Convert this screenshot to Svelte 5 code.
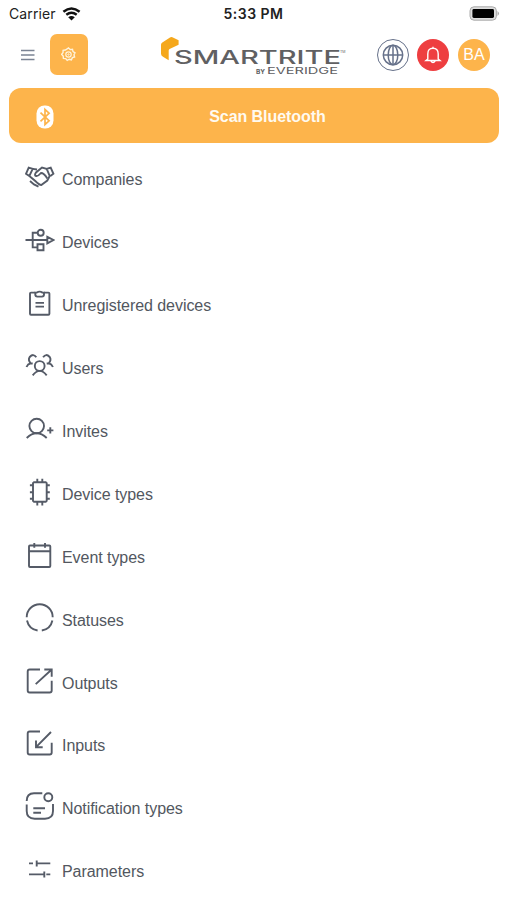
<script>
    const items = [
        { name: "Companies", paths: ["M4.3 14 1 11.8 3.7 5.7l4 1.2-3.4 7.1 6 5q4 4 6 4l6-4.5 2.4-4.5-3-7.1 4-1.2 2.7 6.1-3 2.2", "M7.7 6.9 12 7.5M21.7 6.9 17 5.5 11 10.5q-2 3 0 3.5t5-3q3 0 6.3 5.5M5 19l4 3.4 4.5 2.2"] },
        { name: "Devices", paths: ["M.5 15h21.8M22.3 11.8v6.6l6.2-3.4zM12.7 7.8h-5v14.6h4.8M12.5 19.3h6v6h-6z", "M18.7 7.8a3 3 0 1 1-6 0a3 3 0 1 1 6 0"] },
        { name: "Unregistered devices", paths: ["M10.3 4.6H6q-1 0-1 1v20.2q0 1 1 1h17.4q1 0 1-1V5.6q0-1-1-1H19", "M10.3 4.6h1.5q2.8-2 5.7 0H19v2q0 2-2 2h-4.7q-2 0-2-2zM10.5 14.9H19M10.5 18.6H19"] },
        { name: "Users", paths: ["M19.6 15a4.9 4.9 0 1 1-9.8 0a4.9 4.9 0 1 1 9.8 0", "M7.7 24.3q7-8.8 14 0M1.5 16q1.2-3 4.2-3.7-3-3.3-1-6.3 3.7-4 6.6.3M27.9 16q-1.2-3-4.2-3.7 3-3.3 1-6.3-3.7-4-6.6.3M5.7 12.3l2 .2M23.7 12.3l-2 .2"] },
        { name: "Invites", paths: ["M19 12a7.3 7.3 0 1 1-14.6 0a7.3 7.3 0 1 1 14.6 0", "M1.7 24q10-9.4 20 0M22.2 16.4h6.2M25.3 13.3v6.2"] },
        { name: "Device types", paths: ["M9 5.2h11.7l1 1v17.6l-1 1H9l-1-1V6.2z", "M12.3 1.8v3.4M17.3 1.8v3.4M12.3 24.8v3.6M17.3 24.8v3.6M4.9 8.2H8M4.9 15.2H8M4.9 21.8H8M21.7 8.2h3.1M21.7 15.2h3.1M21.7 21.8h3.1"] },
        { name: "Event types", paths: ["M5 5.5h19.3q1 0 1 1V26q0 1-1 1H5q-1 0-1-1V6.5q0-1 1-1z", "M4 11.3h21.3M9.3 3V7.7M20 3V7.7"] },
        { name: "Statuses", paths: ["M1.7 14.2a13 13 0 0 1 26 0M2 17.5a13 13 0 0 0 10.6 10M27.4 17.5a13 13 0 0 1-10.6 10"] },
        { name: "Outputs", paths: ["M15 3.5H4.7q-2 0-2 2v19q0 2 2 2h20q2 0 2-2v-9.7", "M10.7 18.1 26.7 3.5M19.3 3.5h7.4v7.3"] },
        { name: "Inputs", paths: ["M15 3.5H4.7q-2 0-2 2v19q0 2 2 2h20q2 0 2-2v-9.7", "M26 4 11 19.2M11 12.6v6.6h6.7"] },
        { name: "Notification types", paths: ["M1.7 10Q1.7 2.3 9 2.3h8.3M1.7 13.5V20q0 7.7 8 7.7H20q8 0 8-7.7v-7", "M27.3 6.3a4 4 0 1 1-8 0a4 4 0 1 1 8 0M8.3 17.3H20M8.3 21.7H16"] },
        { name: "Parameters", paths: ["M4 9.4h4M11.7 6.4v6.2M11.7 9.4h13.6M4 20.4h15M19.3 17.4v6.2M21.3 20.4h4"] },
    ];
</script>

<div class="screen">
    <div class="status">
        <div class="carrier">
            <span>Carrier</span>
            <svg width="19" height="14" viewBox="0 0 19 14">
                <path d="M1.4 4.8Q9.5-1.7 17.6 4.8M4.3 7.7q5.2-4 10.4 0" fill="none" stroke="#111" stroke-width="2.5" />
                <path d="M6.2 10.2q3.3-2.5 6.6 0L9.5 13.6z" fill="#111" />
            </svg>
        </div>
        <span class="time">5:33 PM</span>
        <svg class="battery" width="31" height="15" viewBox="0 0 31 15">
            <rect x="1" y=".8" width="26.4" height="13.4" rx="4" fill="#ddd" stroke="#aaa" />
            <rect x="3.4" y="3" width="21.6" height="9" rx="1.4" fill="#000" />
            <path d="M28.5 5q3 2.5 0 5z" fill="#aaa" />
        </svg>
    </div>

    <header>
        <svg class="burger" width="14" height="12" viewBox="0 0 14 12">
            <path d="M0 1.5h13.5M0 6h13.5M0 10.5h13.5" stroke="#7b8494" stroke-width="1.4" />
        </svg>
        <button class="gear" aria-label="Settings">
            <svg width="15" height="15" viewBox="0 0 15 15" fill="none" stroke="#fff3da">
                <path d="m7.5 1 1.7 1.6 2.3-.3.5 2.3 2 1.2-1 2 .6 2.2-2.2.7-1 2.1-2.2-.6-2 1.2-1.5-1.8-2.3-.2-.2-2.3-1.6-1.7L2 5.7l.1-2.3 2.3-.4z" stroke-width="1.4" />
                <circle cx="7.5" cy="7.5" r="2.7" stroke-width="1.2" />
                <circle cx="7.5" cy="7.5" r=".7" />
            </svg>
        </button>
        <svg class="logo" width="188" height="42" viewBox="0 0 188 42">
            <path d="M2 10.8Q2 9.3 3.3 8.5L11 3.4q1.1-.7 2.4-.1l6.2 3v4.5l-9 4.2q-.9.5-.9 1.6v9.7L4 22.8q-2-1.2-2-3z" fill="#f5a81c" />
            <text class="brand" x="15" y="29.8" font-size="18" textLength="167" lengthAdjust="spacingAndGlyphs">SMARTRITE</text>
            <text x="181" y="19" font-size="3.5">TM</text>
            <text x="97" y="39.8" font-size="6" font-weight="bold" textLength="9" lengthAdjust="spacingAndGlyphs">BY</text>
            <text x="108" y="39.8" font-size="9" textLength="71" lengthAdjust="spacingAndGlyphs">EVERIDGE</text>
        </svg>
        <div class="actions">
            <div class="round globe">
                <svg width="22" height="22" viewBox="0 0 22 22" fill="none" stroke="#66718a" stroke-width="1.5">
                    <circle cx="11" cy="11" r="9.7" />
                    <ellipse cx="11" cy="11" rx="4.8" ry="9.7" />
                    <path d="M11 1.3v19.4M1.3 11h19.4" />
                </svg>
            </div>
            <div class="round bell">
                <svg width="18" height="18" viewBox="0 0 18 18" fill="none" stroke="#fff" stroke-width="1.4">
                    <path d="M3.8 13V8Q3.8 2.2 9 2.2T14.2 8v5l1.8 1.5H2zM6.8 14.8q2.2 3.4 4.4 0M9 .8v1.4" />
                </svg>
            </div>
            <div class="round avatar">BA</div>
        </div>
    </header>

    <button class="scan">
        <svg width="18" height="24" viewBox="0 0 18 24">
            <rect x=".5" y=".5" width="17" height="23" rx="8" fill="#fff" />
            <path d="m4.5 7.7 8.6 8.1L9 19.5v-15l4.1 3.7-8.6 8.1" fill="none" stroke="#fdb44b" stroke-width="1.7" />
        </svg>
        <span>Scan Bluetooth</span>
    </button>

    <nav>
        {#each items as item}
            <div class="item">
                <svg width="30" height="30" viewBox="0 0 30 30">
                    {#each item.paths as d}
                        <path {d} />
                    {/each}
                </svg>
                <span>{item.name}</span>
            </div>
        {/each}
    </nav>
</div>

<style>
    :global(body) {
        background: #fff;
    }
    .screen {
        height: 900px;
        overflow: hidden;
        font-family: "Liberation Sans", Arial, sans-serif;
        color: #525760;
    }
    .status {
        display: grid;
        grid-template-columns: 1fr auto 1fr;
        align-items: center;
        height: 27px;
        padding: 0 7px 0 9px;
        font-family: Inter, sans-serif;
        font-size: 14px;
        color: #222;
    }
    .carrier {
        display: flex;
        align-items: center;
        gap: 6px;
        letter-spacing: 0.1px;
    }
    .time {
        margin-right: 2px;
        font-weight: 600;
        letter-spacing: 0.5px;
    }
    .battery {
        justify-self: end;
    }
    header {
        display: flex;
        align-items: center;
        height: 55px;
        padding: 0 17px 0 21px;
    }
    button {
        border: none;
        font-family: inherit;
        background: #fdb44b;
    }
    .gear {
        display: flex;
        align-items: center;
        justify-content: center;
        width: 38px;
        height: 41px;
        margin-left: 15px;
        padding: 0 1px 0 0;
        border-radius: 7px;
    }
    .logo {
        margin-left: 71px;
    }
    .logo text {
        fill: #606062;
        font-family: Inter, sans-serif;
    }
    .logo .brand {
        font-weight: 500;
    }
    .actions {
        display: flex;
        gap: 8px;
        margin-left: auto;
    }
    .round {
        display: flex;
        align-items: center;
        justify-content: center;
        box-sizing: border-box;
        width: 32px;
        height: 32px;
        border-radius: 50%;
    }
    .globe {
        border: 1px solid #66718a;
    }
    .bell {
        background: #ee3e40;
    }
    .avatar {
        margin-left: 1px;
        background: #fdb44b;
        color: #fff;
        font-size: 16px;
    }
    .scan {
        display: grid;
        grid-template-columns: 18px 1fr;
        align-items: center;
        column-gap: 9px;
        width: 490px;
        height: 55px;
        margin: 6px 0 0 9px;
        padding: 2px 27px 0;
        border-radius: 12px;
        color: #fffaf0;
        font-size: 16px;
        font-weight: bold;
        letter-spacing: -0.05px;
    }
    nav {
        margin-top: 3px;
    }
    .item {
        display: flex;
        align-items: center;
        gap: 7px;
        height: 62.9px;
        padding-left: 25px;
        font-size: 16px;
        letter-spacing: -0.06px;
    }
    .item svg {
        fill: none;
        stroke: #555b67;
        stroke-width: 1.9;
    }
    .item span {
        padding-top: 6px;
    }
</style>
